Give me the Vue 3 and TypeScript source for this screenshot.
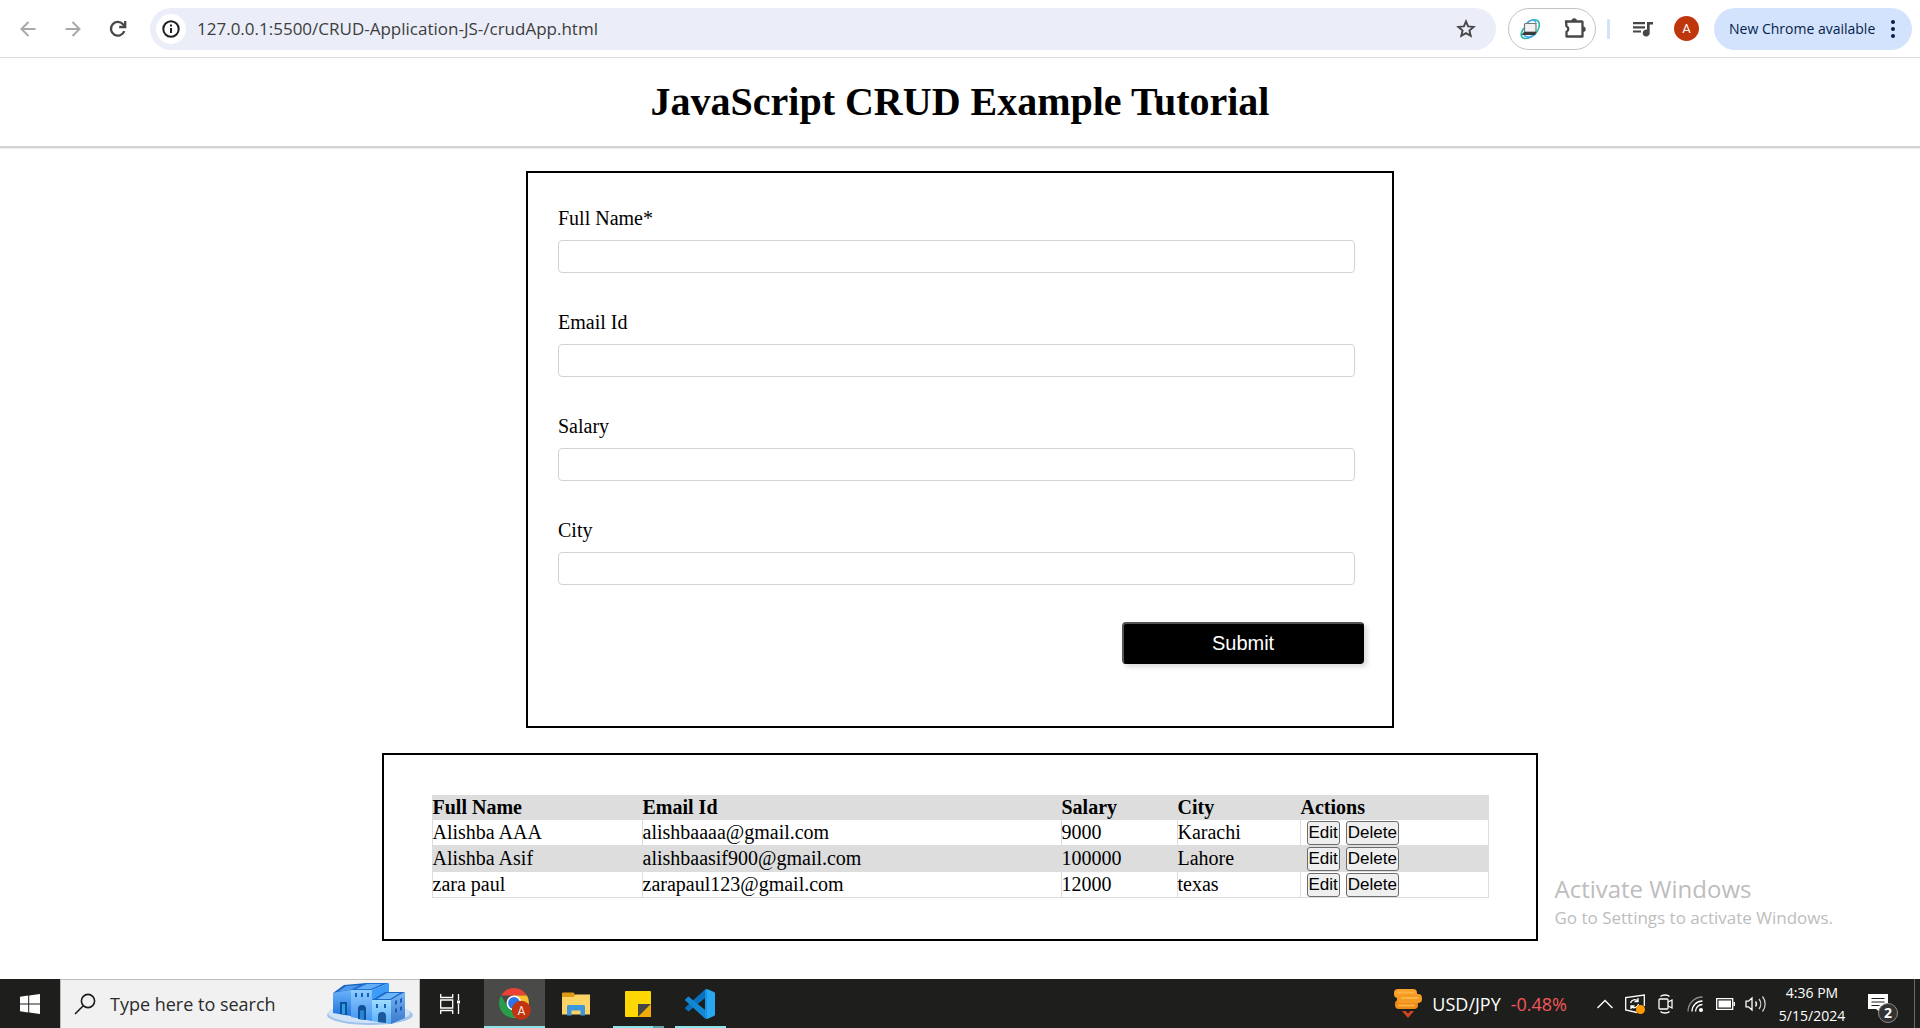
<script setup lang="ts">
import { ref } from 'vue'

interface Employee {
  fullName: string
  email: string
  salary: string
  city: string
}

interface Field {
  id: keyof Employee
  label: string
}

const address = ref('127.0.0.1:5500/CRUD-Application-JS-/crudApp.html')

const fields: Field[] = [
  { id: 'fullName', label: 'Full Name*' },
  { id: 'email', label: 'Email Id' },
  { id: 'salary', label: 'Salary' },
  { id: 'city', label: 'City' },
]

const emptyForm = (): Employee => ({ fullName: '', email: '', salary: '', city: '' })

const form = ref<Employee>(emptyForm())
const editing = ref<number | null>(null)
const employees = ref<Employee[]>([
  { fullName: 'Alishba AAA', email: 'alishbaaaa@gmail.com', salary: '9000', city: 'Karachi' },
  { fullName: 'Alishba Asif', email: 'alishbaasif900@gmail.com', salary: '100000', city: 'Lahore' },
  { fullName: 'zara paul', email: 'zarapaul123@gmail.com', salary: '12000', city: 'texas' },
])

function submit(): void {
  if (!form.value.fullName) return
  if (editing.value === null) employees.value.push({ ...form.value })
  else employees.value[editing.value] = { ...form.value }
  editing.value = null
  form.value = emptyForm()
}

function edit(index: number): void {
  editing.value = index
  form.value = { ...employees.value[index] }
}

function remove(index: number): void {
  employees.value.splice(index, 1)
}
</script>

<template>
  <div class="screen">
    <header class="toolbar">
      <nav class="nav">
        <button class="icon-btn" type="button" aria-label="Back">
          <svg width="20" height="20" viewBox="0 0 20 20" fill="none" stroke="#a9a9a9" stroke-width="2">
            <path d="M17.500 10H4M10.500 3L3.500 10l7 7" />
          </svg>
        </button>
        <button class="icon-btn" type="button" aria-label="Forward">
          <svg width="20" height="20" viewBox="0 0 20 20" fill="none" stroke="#a9a9a9" stroke-width="2">
            <path d="M2.500 10H16M9.500 3l7 7-7 7" />
          </svg>
        </button>
        <button class="icon-btn" type="button" aria-label="Reload">
          <svg width="20" height="20" viewBox="0 0 20 20" fill="none" stroke="#474747" stroke-width="2.300">
            <path d="M16.300 12.200A6.900 6.900 0 1 1 15 5.200L17 7.300" />
            <path d="M17.200 2v6h-6" />
          </svg>
        </button>
      </nav>

      <div class="omnibox">
        <button class="site-info" type="button" aria-label="Site information">
          <svg width="18" height="18" viewBox="0 0 18 18" fill="none" stroke="#1f1f1f" stroke-width="2">
            <circle cx="9" cy="9" r="7.700" />
            <path d="M9 8v5M9 4.600v2" />
          </svg>
        </button>
        <input v-model="address" class="address" type="text" aria-label="Address" />
        <button class="icon-btn" type="button" aria-label="Bookmark">
          <svg width="20" height="20" viewBox="0 0 20 20" fill="none" stroke="#474747" stroke-width="1.900">
            <path d="M10 2.400l2.100 5 5.500.500-4.200 3.600 1.300 5.400L10 14.100l-4.700 2.800 1.300-5.400L2.400 7.900l5.500-.500z" />
          </svg>
        </button>
      </div>

      <div class="extensions">
        <button class="icon-btn" type="button" aria-label="Remote extension">
          <svg width="22" height="22" viewBox="0 0 22 22" fill="none">
            <path d="M5 10C2 14 1 18 4 20c4 2 12-2 15-8 2-5 2-9-2-10-3-1-7 1-9 3" stroke="#25b7a5" stroke-width="1.600" />
            <path d="M8 5c3-4 9-4 9 1M5 17c2 3 8 3 12-2" stroke="#4ba4ee" stroke-width="1.400" />
            <rect x="5.500" y="5.500" width="11.500" height="8.500" rx="1" fill="#f2f2f2" stroke="#777" stroke-width="1.200" />
            <path d="M2.500 17L5 14h12.500L16 17z" fill="#3a3a3a" />
          </svg>
        </button>
        <button class="icon-btn" type="button" aria-label="Extensions">
          <svg width="22" height="22" viewBox="0 0 22 22" fill="none">
            <path d="M2 3.500h16a.5.500 0 0 1 .500.500v14.500H2.500V13.800a3 3 0 0 0 0-5.500z" stroke="#474747" stroke-width="2.300" stroke-linejoin="round" />
            <path d="M7.500 3a2.700 2.700 0 0 1 5.400 0zM19 8.500a2.700 2.700 0 0 1 0 5.400z" fill="#474747" />
          </svg>
        </button>
      </div>

      <span class="divider"></span>

      <button class="icon-btn" type="button" aria-label="Media controls">
        <svg width="22" height="18" viewBox="0 0 22 18" fill="#474747">
          <path d="M1 2h12v2.200H1zM1 6.200h12v2.200H1zM1 10.400h8v2.200H1z" />
          <path d="M15 2h6v2.400h-3.300v8.600a3.500 3.500 0 1 1-2.700-3.300z" />
        </svg>
      </button>
      <button class="avatar" type="button" aria-label="Profile">A</button>
      <button class="update" type="button">
        <span>New Chrome available</span>
        <svg width="4" height="18" viewBox="0 0 4 18" fill="#041e49">
          <circle cx="2" cy="2" r="2" /><circle cx="2" cy="9" r="2" /><circle cx="2" cy="16" r="2" />
        </svg>
      </button>
    </header>

    <main class="page">
      <h1 class="title">JavaScript CRUD Example Tutorial</h1>

      <form class="form-box" @submit.prevent="submit">
        <div class="fields">
          <div v-for="field in fields" :key="field.id" class="field">
            <label :for="field.id">{{ field.label }}</label>
            <input :id="field.id" v-model="form[field.id]" type="text" />
          </div>
        </div>
        <button class="submit" type="submit">Submit</button>
      </form>

      <section class="table-box">
        <table>
          <colgroup>
            <col class="col-name" />
            <col class="col-email" />
            <col class="col-salary" />
            <col class="col-city" />
            <col class="col-actions" />
          </colgroup>
          <thead>
            <tr>
              <th>Full Name</th>
              <th>Email Id</th>
              <th>Salary</th>
              <th>City</th>
              <th>Actions</th>
            </tr>
          </thead>
          <tbody>
            <tr v-for="(person, index) in employees" :key="person.email">
              <td>{{ person.fullName }}</td>
              <td>{{ person.email }}</td>
              <td>{{ person.salary }}</td>
              <td>{{ person.city }}</td>
              <td>
                <div class="actions">
                  <button type="button" @click="edit(index)">Edit</button>
                  <button type="button" @click="remove(index)">Delete</button>
                </div>
              </td>
            </tr>
          </tbody>
        </table>
      </section>

      <aside class="watermark">
        <p class="watermark-title">Activate Windows</p>
        <p class="watermark-text">Go to Settings to activate Windows.</p>
      </aside>
    </main>

    <footer class="taskbar">
      <button class="task start" type="button" aria-label="Start">
        <svg width="20" height="20" viewBox="0 0 20 20" fill="#fff">
          <path d="M0 2.800L8.200 1.600V9.500H0zM9.200 1.500L20 0v9.500H9.200zM0 10.500h8.200v7.900L0 17.200zM9.200 10.500H20V20L9.200 18.500z" />
        </svg>
      </button>

      <div class="search">
        <svg width="22" height="22" viewBox="0 0 22 22" fill="none" stroke="#1b1b1b" stroke-width="1.600">
          <circle cx="14" cy="8" r="6.600" />
          <path d="M9.300 12.700L1 21" />
        </svg>
        <input type="text" placeholder="Type here to search" aria-label="Type here to search" />
        <svg width="86" height="44" viewBox="0 0 86 44">
          <defs>
            <linearGradient id="wallA" x1="0" y1="0" x2="0" y2="1">
              <stop offset="0" stop-color="#6bb4fa" /><stop offset="1" stop-color="#1f74dd" />
            </linearGradient>
            <linearGradient id="wallB" x1="0" y1="0" x2="0" y2="1">
              <stop offset="0" stop-color="#8fcbff" /><stop offset="1" stop-color="#4393f0" />
            </linearGradient>
            <linearGradient id="wallC" x1="0" y1="0" x2="0" y2="1">
              <stop offset="0" stop-color="#9fdcff" /><stop offset="1" stop-color="#5aaef8" />
            </linearGradient>
            <linearGradient id="sideC" x1="0" y1="0" x2="0" y2="1">
              <stop offset="0" stop-color="#77b6f5" /><stop offset="1" stop-color="#3a78cc" />
            </linearGradient>
          </defs>
          <ellipse cx="43" cy="33" rx="43" ry="10" fill="#9fc3ec" />
          <ellipse cx="42" cy="31" rx="41" ry="10" fill="#cfe2f8" />
          <path d="M6 11L24 8v26L6 31z" fill="url(#wallA)" />
          <path d="M6 11L17 3 40 1 24 8z" fill="#1560bd" />
          <path d="M10 10l9-6 14-1-10 5z" fill="#4d9af0" />
          <path d="M24 8h21v31L24 35z" fill="url(#wallB)" />
          <path d="M24 8L38 1h24L45 8z" fill="#1c6fd4" />
          <path d="M29 7l11-5h15L44 7z" fill="#63adf6" />
          <path d="M45 8l17-7v22l-17 8z" fill="#3d9cf7" />
          <path d="M64 18l14-8v26l-14 6z" fill="url(#sideC)" />
          <path d="M45 18h19v24l-19-3z" fill="url(#wallC)" />
          <path d="M45 18l13-8h20l-14 8z" fill="#1b69cb" />
          <path d="M50 17l10-6h13l-10 6z" fill="#6cb6fa" />
          <path d="M13 20h7v13l-7-1z" fill="#0f5199" />
          <path d="M15 22h3v10h-3z" fill="#2aa2e8" />
          <path d="M31 37v-10a4 4 0 0 1 8 0v11z" fill="#124f94" />
          <path d="M33 37v-8a3 3 0 0 1 4 0v9z" fill="#2586d8" />
          <path d="M51 40v-6a4 4 0 0 1 8 0v7z" fill="#1b5b9d" />
          <path d="M28 11h2v4h-2zM34 11h2v4h-2zM40 11h2v4h-2zM49 22h2v4h-2zM57 22h2v4h-2z" fill="#1360bb" />
          <path d="M68 19l2-1v4l-2 1zM73 17l2-1v4l-2 1zM68 27l2-1v4l-2 1zM73 25l2-1v4l-2 1z" fill="#1c5db1" />
        </svg>
      </div>

      <button class="task view" type="button" aria-label="Task view">
        <svg width="20" height="20" viewBox="0 0 20 20" fill="none" stroke="#fff" stroke-width="1.300">
          <path d="M.700 0v3.500h12V0M.700 20v-3.500h12V20M.700 6h12v8h-12zM18.500 0v6M18.500 10v10" />
          <rect x="17" y="6.500" width="3" height="3" fill="#fff" stroke="none" />
        </svg>
      </button>
      <button class="task app active" type="button" aria-label="Google Chrome">
        <svg width="32" height="32" viewBox="0 0 32 32">
          <path d="M2.010 7.500A15 15 0 0 1 27.990 7.500H15z" fill="#ea4335" />
          <path d="M27.990 7.500A15 15 0 0 1 15 30L21.500 18.700 15 7.500z" fill="#fbc02d" />
          <path d="M15 30A15 15 0 0 1 2.010 7.500L8.500 18.700h13z" fill="#2a9d4c" />
          <circle cx="15" cy="15" r="7.500" fill="#fff" />
          <circle cx="15" cy="15" r="5.900" fill="#2f73e8" />
          <circle cx="22.300" cy="22.300" r="9.500" fill="#c0350f" />
        </svg>
        <span class="chrome-badge">A</span>
      </button>
      <button class="task app" type="button" aria-label="File Explorer">
        <svg width="28" height="24" viewBox="0 0 28 24">
          <path d="M0 1.500A1 1 0 0 1 1 .500h10.500L13.500 3v4H0z" fill="#dd9a12" />
          <path d="M0 5h11.500l2-2.500H28v20H0z" fill="#fcd367" />
          <path d="M5 23.500v-9A1.500 1.500 0 0 1 6.500 13h15a1.500 1.500 0 0 1 1.500 1.500v9h-4.500v-5h-9v5z" fill="#3d97dc" />
        </svg>
      </button>
      <button class="task app notes" type="button" aria-label="Sticky Notes">
        <svg width="26" height="26" viewBox="0 0 26 26">
          <rect width="26" height="26" rx="1" fill="#fed804" />
          <path d="M13 26V13h13z" fill="#454545" />
          <path d="M13.500 26L26 13.500V26z" fill="#f2ab0a" />
        </svg>
      </button>
      <button class="task app code" type="button" aria-label="Visual Studio Code">
        <svg width="30" height="30" viewBox="0 0 30 30">
          <path d="M22 7.500L3.500 22.500 0.500 20a1.200 1.200 0 0 1 0-1.800L20 .500z" fill="#0a6fbd" />
          <path d="M22 22.500L3.500 7.500.500 10a1.200 1.200 0 0 0 0 1.800L20 29.500z" fill="#1287d3" />
          <path d="M22 0l7 3a1.500 1.500 0 0 1 1 1.500v21a1.500 1.500 0 0 1-1 1.500l-7 3z" fill="#28a8f0" />
          <path d="M20 .500L22 0v30l-2-.500z" fill="#1b93df" />
        </svg>
      </button>

      <div class="tray">
        <button class="task news" type="button">
          <svg width="28" height="30" viewBox="0 0 28 30">
            <rect x="0" y="0" width="23" height="9" rx="4" fill="#f9a12b" />
            <rect x="1" y="11" width="23" height="9" rx="4" fill="#ee8a18" />
            <rect x="3" y="5" width="25" height="9" rx="4" fill="#f59a24" />
            <path d="M4 3.500h15M8 9h16M5 16.500h15" stroke="#fdb446" stroke-width="2" stroke-linecap="round" />
            <path d="M8 22h3.500l2.500 2.500 2.500-2.500H20l-6 7z" fill="#d2451e" />
          </svg>
          <span>USD/JPY</span>
          <span class="loss">-0.48%</span>
        </button>
        <button class="task" type="button" aria-label="Show hidden icons">
          <svg width="16" height="10" viewBox="0 0 16 10" fill="none" stroke="#fff" stroke-width="1.400">
            <path d="M.5 9L8 1.500 15.500 9" />
          </svg>
        </button>
        <div class="status">
          <svg width="20" height="20" viewBox="0 0 20 20" fill="none" stroke="#fff" stroke-width="1.300">
            <path d="M12 18.500L.700 16V3.500L19.300 1v11" />
            <path d="M5.500 9A4.500 4.500 0 0 1 13 7M13 4v3.500H9.500M13.500 10A4.500 4.500 0 0 1 6 12.500M6 15v-3h3.500" />
            <circle cx="15.500" cy="15.500" r="4.500" fill="#ff9a00" stroke="none" />
          </svg>
          <svg width="16" height="20" viewBox="0 0 16 20" fill="none" stroke="#fff" stroke-width="1.300">
            <path d="M2.500 2.500c2-2 7-2 9 0M2.500 17.500c2 2 7 2 9 0M10 8l4-2v8l-4-2" />
            <rect x="1" y="5" width="9" height="10" rx="1" />
          </svg>
          <svg width="16" height="16" viewBox="0 0 16 16" fill="none" stroke="#fff" stroke-width="1.300">
            <path d="M1 15.500A14.500 14.500 0 0 1 15.500 1" stroke="#8d8d8d" />
            <path d="M5 15.500A10.500 10.500 0 0 1 15.500 5M8.500 15.500A7 7 0 0 1 15.500 8.500" />
            <circle cx="14" cy="14" r="2" fill="#fff" stroke="none" />
          </svg>
          <svg width="19" height="12" viewBox="0 0 19 12" fill="none" stroke="#fff" stroke-width="1.300">
            <path d="M.7.700h16v10.600h-16zM18.300 4v4" />
            <rect x="2.500" y="2.500" width="12.500" height="7" fill="#fff" stroke="none" />
          </svg>
        </div>
        <svg class="volume" width="22" height="18" viewBox="0 0 22 18" fill="none" stroke="#fff" stroke-width="1.300">
          <path d="M1 6.200h2.500L7 3v12l-3.500-3.200H1zM10.500 6.500a4 4 0 0 1 0 5" />
          <path d="M14 4a8 8 0 0 1 0 10M17.500 1.500a12 12 0 0 1 0 15" stroke="#cfcfcf" />
        </svg>
        <button class="task clock" type="button">
          <time>4:36 PM</time>
          <time>5/15/2024</time>
        </button>
        <button class="task notify" type="button" aria-label="Notifications">
          <svg width="20" height="20" viewBox="0 0 20 20">
            <path d="M0 0h20v15h-6v5l-6-5H0z" fill="#fff" />
            <path d="M3.500 4.500h13M3.500 8h13M3.500 11.500h8" stroke="#1e1e1c" stroke-width="1.200" />
          </svg>
          <span class="count">2</span>
        </button>
      </div>
    </footer>
  </div>
</template>

<style>
body {
  margin: 0;
}
</style>

<style scoped>
.screen {
  display: flex;
  flex-direction: column;
  min-height: 100vh;
  background: #fff;
  color: #000;
  font-family: "Open Sans", "Noto Sans", sans-serif;
}

button {
  font-family: inherit;
  cursor: pointer;
}

svg {
  display: block;
  flex: none;
}

/* Browser toolbar */
.toolbar {
  display: flex;
  align-items: center;
  height: 58px;
  padding: 0 8px 0 18px;
  border-bottom: 1px solid #dcdcdc;
  box-sizing: border-box;
}

.icon-btn {
  display: flex;
  padding: 0;
  border: 0;
  background: none;
}

.nav {
  display: flex;
  gap: 25px;
  margin-right: 22px;
}

.omnibox {
  display: flex;
  flex: 1;
  align-items: center;
  height: 42px;
  padding: 0 20px 0 6px;
  border-radius: 21px;
  box-sizing: border-box;
  background: #ebeef8;
}

.site-info {
  display: flex;
  align-items: center;
  justify-content: center;
  width: 30px;
  height: 30px;
  padding: 0;
  border: 0;
  border-radius: 50%;
  background: #fff;
}

.address {
  flex: 1;
  min-width: 0;
  margin-left: 11px;
  padding: 0;
  border: 0;
  outline: 0;
  background: none;
  color: #3c3d40;
  font: 17px/24px "Open Sans", "Noto Sans", sans-serif;
}

.extensions {
  display: flex;
  align-items: center;
  gap: 23px;
  height: 42px;
  margin-left: 12px;
  padding: 0 9px 0 10px;
  border: 1px solid #c4c4c4;
  border-radius: 21px;
  box-sizing: border-box;
}

.divider {
  width: 3px;
  height: 20px;
  margin: 0 22px 0 11px;
  border-radius: 1px;
  background: #d3e3fd;
}

.avatar {
  width: 25px;
  height: 25px;
  margin: 0 15px 0 20px;
  padding: 0;
  border: 0;
  border-radius: 50%;
  background: #bf360c;
  color: #fff;
  font: 13px/25px Roboto, sans-serif;
}

.update {
  display: flex;
  align-items: center;
  justify-content: space-between;
  width: 198px;
  height: 42px;
  padding: 0 17px 0 15px;
  border: 0;
  border-radius: 21px;
  background: #d3e3fd;
  color: #041e49;
  font-size: 14px;
  white-space: nowrap;
}

/* Web page */
.page {
  position: relative;
  flex: 1;
  padding-bottom: 38px;
  font: 20px/23px "Liberation Serif", "Times New Roman", serif;
}

.title {
  margin: 0 0 23px;
  padding: 21px 0;
  border-bottom: 2px solid #d3d3d3;
  box-shadow: 0 1px 0 #ebebeb;
  font-size: 40px;
  line-height: 46px;
  text-align: center;
}

.form-box {
  display: flex;
  flex-direction: column;
  width: 45%;
  margin: 0 auto 25px;
  border: 2px solid #000;
}

.fields {
  display: flex;
  flex-direction: column;
  gap: 38px;
  padding: 34px 37px 37px 30px;
}

.field {
  display: flex;
  flex-direction: column;
  gap: 10px;
}

.field input {
  height: 33px;
  padding: 0 8px;
  border: 1px solid #d3d3d3;
  border-radius: 4px;
  box-sizing: border-box;
  font: inherit;
}

.submit {
  align-self: flex-end;
  width: 28%;
  height: 42px;
  margin: 0 28px 62px 0;
  padding: 0;
  border: 2px outset #000;
  border-radius: 4px;
  box-sizing: border-box;
  background: #000;
  box-shadow: 3px 3px 5px rgba(0, 0, 0, 0.15);
  color: #fff;
  font: 20px/24px "Liberation Sans", Arial, sans-serif;
}

.table-box {
  width: 60%;
  margin: 0 auto;
  padding: 40px 0 41px;
  border: 2px solid #000;
}

table {
  width: calc(100% - 96px);
  margin: 0 auto;
  border-collapse: collapse;
  table-layout: fixed;
}

.col-name { width: 210px; }
.col-email { width: 419px; }
.col-salary { width: 116px; }
.col-city { width: 123px; }
.col-actions { width: 188px; }

th,
td {
  height: 25px;
  padding: 0;
  border: 1px solid #ddd;
  text-align: left;
}

th {
  height: 23px;
}

thead tr,
tbody tr:nth-child(even) {
  background: #ddd;
}

.actions {
  display: flex;
  gap: 6px;
  padding-left: 6px;
}

.actions button {
  height: 24px;
  padding: 0 1px;
  border: 1px solid #6b6b6b;
  border-radius: 3px;
  box-sizing: border-box;
  background: #efefef;
  color: #000;
  font: 17px/20px "Liberation Sans", Arial, sans-serif;
}

.watermark {
  position: absolute;
  right: 87px;
  bottom: 48px;
  color: #bdbdbd;
  font-family: "Open Sans", "Noto Sans", sans-serif;
}

.watermark p {
  margin: 0;
}

.watermark-title {
  font-size: 24px;
  line-height: 32px;
}

.watermark-text {
  font-size: 17px;
  line-height: 26px;
}

/* Windows taskbar */
.taskbar {
  display: flex;
  height: 49px;
  background: #1e1e1c;
  color: #fff;
}

.task {
  position: relative;
  display: flex;
  align-items: center;
  justify-content: center;
  padding: 0;
  border: 0;
  background: none;
  color: #fff;
}

.start {
  width: 60px;
}

.search {
  display: flex;
  flex: 0 1 360px;
  align-items: center;
  min-width: 0;
  padding: 0 6px 0 13px;
  border: 1px solid #bcbcbc;
  border-bottom: 0;
  box-sizing: border-box;
  background: #f1f1f1;
}

.search input {
  flex: 1;
  width: 100%;
  min-width: 0;
  padding: 0 0 0 14px;
  border: 0;
  outline: 0;
  background: none;
  font: 18px/24px "Open Sans", "Noto Sans", sans-serif;
}

.search input::placeholder {
  color: #2b2b2b;
  opacity: 1;
}

.view {
  width: 64px;
  padding-right: 4px;
  box-sizing: border-box;
}

.app {
  width: 62px;
}

.active {
  width: 61px;
  background: #4a4a49;
}

.active::after,
.notes::after,
.code::after {
  position: absolute;
  right: 5px;
  bottom: 0;
  left: 6px;
  height: 2px;
  background: #8be3e8;
  content: "";
}

.active::after {
  right: 0;
  left: 0;
}

.notes::after {
  background: linear-gradient(90deg, #8be3e8 79%, #5fa3a8 79%);
}

.chrome-badge {
  position: absolute;
  top: 23px;
  right: 14px;
  width: 19px;
  color: #f6e9e5;
  font: 12px/19px Roboto, sans-serif;
  text-align: center;
}

.tray {
  display: flex;
  align-items: center;
  margin-left: auto;
  padding-right: 5px;
}

.tray .task {
  height: 100%;
}

.tray .news {
  gap: 10px;
  margin-right: 30px;
  font-size: 18px;
}

.loss {
  color: #f2585b;
}

.status {
  display: flex;
  align-items: center;
  gap: 13px;
  margin: 0 10px 0 12px;
}

.volume {
  margin-right: 11px;
}

.clock {
  flex-direction: column;
  width: 68px;
  font-size: 14px;
  line-height: 23px;
}

.notify {
  width: 69px;
  padding-right: 4px;
  border-right: 1px solid #6a6a69;
  box-sizing: border-box;
}

.count {
  position: absolute;
  top: 24px;
  left: 32px;
  width: 18px;
  height: 18px;
  border: 1px solid #8c8c8c;
  border-radius: 50%;
  background: #333;
  font: bold 14px/18px "Open Sans", "Noto Sans", sans-serif;
  text-align: center;
}
</style>
